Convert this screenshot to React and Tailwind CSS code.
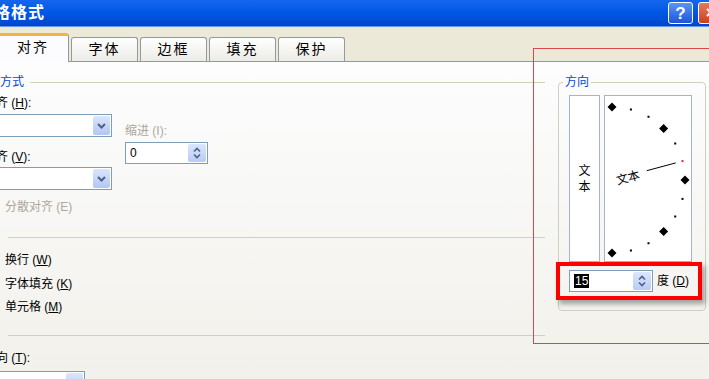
import React from 'react';

const ANGLES = [90, 75, 60, 45, 30, 15, 0, -15, -30, -45, -60, -75, -90];
const CX = 7;
const CY = 84;
const R = 73;

function polar(a, r) {
  const rad = (a * Math.PI) / 180;
  return [CX + r * Math.cos(rad), CY - r * Math.sin(rad)];
}

function Chevron() {
  return (
    <svg width="9" height="6" viewBox="0 0 9 6">
      <path d="M1 1 L4.5 4.5 L8 1" fill="none" stroke="#4d6185" strokeWidth="2" />
    </svg>
  );
}

function SpinArrows() {
  return (
    <svg width="8" height="12" viewBox="0 0 8 12">
      <path d="M1 4.5 L4 1.5 L7 4.5" fill="none" stroke="#4d6185" strokeWidth="1.6" />
      <path d="M1 7.5 L4 10.5 L7 7.5" fill="none" stroke="#4d6185" strokeWidth="1.6" />
    </svg>
  );
}

function Combo({ className, children }) {
  return (
    <div className={`h-[23px] border border-[#7f9db9] bg-white flex items-stretch p-px ${className}`}>
      <div className="flex-1 pl-[3px] text-[12px] leading-[19px] overflow-hidden">{children}</div>
      <div className="w-[17px] rounded-[2px] bg-linear-to-b from-[#dbe6fd] to-[#b2c6f5] flex items-center justify-center">
        <Chevron />
      </div>
    </div>
  );
}

function Spin({ className, children }) {
  return (
    <div className={`h-[22px] border border-[#7f9db9] bg-white flex items-stretch p-px ${className}`}>
      <div className="flex-1 pl-[3px] text-[12px] leading-[18px]">{children}</div>
      <div className="w-[18px] rounded-[2px] bg-linear-to-b from-[#dbe6fd] to-[#b9cbf6] flex items-center justify-center">
        <SpinArrows />
      </div>
    </div>
  );
}

function Dial() {
  const [l1x, l1y] = polar(15, 36);
  const [l2x, l2y] = polar(15, 66);
  return (
    <svg width="86" height="165" viewBox="0 0 86 165">
      {ANGLES.map((a) => {
        const [x, y] = polar(a, R);
        if (a % 45 === 0) {
          return <path key={a} d={`M${x} ${y - 4.5} L${x + 4.5} ${y} L${x} ${y + 4.5} L${x - 4.5} ${y} Z`} fill="#000" />;
        }
        return <rect key={a} x={x - 1} y={y - 1} width="2" height="2" fill={a === 15 ? '#d03030' : '#000'} />;
      })}
      <line x1={l1x} y1={l1y} x2={l2x} y2={l2y} stroke="#000" strokeWidth="1" />
      <text x="11" y="90" fontSize="12" fill="#000" transform={`rotate(-15 ${CX} ${CY})`} fontFamily="Noto Sans CJK SC, sans-serif">
        文本
      </text>
    </svg>
  );
}

export default function App() {
  return (
    <div className="relative w-[709px] h-[379px] overflow-hidden flex flex-col bg-[#f2f1ec] text-black font-['Liberation_Sans','Noto_Sans_CJK_SC',sans-serif]">
      {/* title bar */}
      <div className="h-[27px] shrink-0 flex items-center bg-linear-to-b from-[#1466ee] via-[#0057e4] to-[#0046cc] border-b border-[#6a96e6]">
        <span className="ml-[-40px] text-white font-bold text-[16px] tracking-[1px] whitespace-nowrap">单元格格式</span>
        <div className="flex-1" />
        <div className="w-[25px] h-[22px] shrink-0 rounded-[3px] border border-white bg-linear-to-b from-[#5a94f6] to-[#1d55da] flex items-center justify-center text-white text-[17px] font-bold leading-none">?</div>
        <div className="w-[25px] h-[22px] shrink-0 ml-[5px] mr-[-14px] rounded-[3px] border border-white bg-linear-to-b from-[#e8785a] to-[#c9401c] flex items-center justify-center text-white text-[16px] font-bold leading-none">×</div>
      </div>

      {/* tab strip */}
      <div className="h-[34px] shrink-0 bg-[#ece9d8] flex items-end text-[14px] tracking-[2px]">
        <div className="relative z-10 ml-[-2px] mb-[-1px] w-[71px] h-[29px] bg-[#fcfcfe] border-t-[3px] border-t-[#f5b53a] border-r border-r-[#919b9c] rounded-tr-[3px] flex items-center justify-center pb-[3px]">
          对齐
        </div>
        {['字体', '边框', '填充', '保护'].map((t) => (
          <div key={t} className="ml-[2px] w-[67px] h-[24px] bg-linear-to-b from-white to-[#ecebe6] border border-b-0 border-[#919b9c] rounded-t-[3px] flex items-center justify-center">
            {t}
          </div>
        ))}
      </div>

      {/* panel */}
      <div className="flex-1 flex border-t border-[#919b9c] bg-linear-to-b from-[#fdfdfe] to-[#f1f0ea] text-[12px]">
        {/* left column */}
        <div className="w-[545px] shrink-0 flex flex-col">
          <div className="mt-[13px] h-[15px] flex items-center">
            <span className="text-[#0046d5] leading-[15px]">方式</span>
            <div className="flex-1 ml-[6px] h-px bg-[#d0d0bf]" />
          </div>
          <div className="mt-[6px] flex">
            <div className="w-[112px] flex flex-col">
              <span className="ml-[-40px] h-[14px] leading-[14px] whitespace-nowrap">水平对齐 (<u>H</u>):</span>
              <Combo className="mt-[4px] ml-[-20px]" />
              <span className="mt-[13px] ml-[-40px] h-[14px] leading-[14px] whitespace-nowrap">垂直对齐 (<u>V</u>):</span>
              <Combo className="mt-[3px] ml-[-20px]" />
            </div>
            <div className="ml-[13px] pt-[28px] flex flex-col">
              <span className="h-[14px] leading-[14px] text-[#aca899]">缩进 (I):</span>
              <Spin className="mt-[4px] w-[83px]">0</Spin>
            </div>
          </div>
          <span className="mt-[10px] ml-[5px] h-[14px] leading-[14px] text-[#aca899]">分散对齐 (E)</span>
          <div className="mt-[23px] ml-[8px] h-px bg-[#d0d0bf]" />
          <span className="mt-[15px] ml-[5px] h-[14px] leading-[14px]">换行 (<u>W</u>)</span>
          <span className="mt-[10px] ml-[5px] h-[14px] leading-[14px]">字体填充 (<u>K</u>)</span>
          <span className="mt-[9px] ml-[5px] h-[14px] leading-[14px]">单元格 (<u>M</u>)</span>
          <div className="mt-[21px] ml-[8px] h-px bg-[#d0d0bf]" />
          <span className="mt-[15px] ml-[-40px] h-[14px] leading-[14px] whitespace-nowrap">文字方向 (<u>T</u>):</span>
          <Combo className="mt-[6px] ml-[-20px] w-[105px] shrink-0">空</Combo>
        </div>

        {/* right column */}
        <div className="ml-[13px] mt-[13px] w-[148px] shrink-0">
          <fieldset className="border border-[#d0d0bf] rounded-[4px] pl-[10px] pt-[5px] pb-[18px]">
            <legend className="ml-[-6px] px-[2px] text-[#0046d5] leading-[15px]">方向</legend>
            <div className="flex gap-[4px]">
              <div className="w-[31px] h-[167px] border border-[#a4b5cb] bg-white flex flex-col items-center justify-center leading-[16px]">
                <span>文</span>
                <span>本</span>
              </div>
              <div className="w-[88px] h-[167px] border border-[#a4b5cb] bg-white">
                <Dial />
              </div>
            </div>
            <div className="mt-[8px] flex items-center">
              <Spin className="w-[84px]">
                <span className="bg-black text-white px-px">15</span>
              </Spin>
              <span className="ml-[4px] whitespace-nowrap">度 (<u>D</u>)</span>
            </div>
          </fieldset>
        </div>
      </div>

      {/* annotation overlays */}
      <div className="absolute left-[533px] top-[48px] w-[200px] h-[296px] border border-[#d94848] pointer-events-none" />
      <div className="absolute left-[556px] top-[262px] w-[146px] h-[38px] border-4 border-[#ff0000] shadow-[3px_4px_5px_rgba(0,0,0,0.35)] pointer-events-none" />
    </div>
  );
}
